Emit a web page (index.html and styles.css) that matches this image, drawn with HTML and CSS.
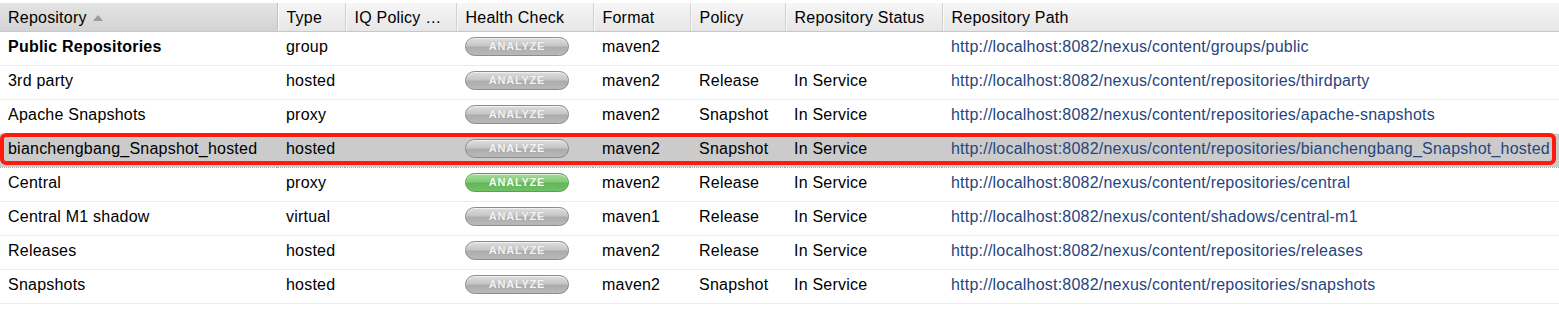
FILE: index.html
```html
<!DOCTYPE html>
<html>
<head>
<meta charset="utf-8">
<link rel="stylesheet" href="styles.css">
</head>
<body>
<div class="grid-wrap">
<table class="grid">
  <colgroup>
    <col class="c-repo"><col class="c-type"><col class="c-iq"><col class="c-health"><col class="c-format"><col class="c-policy"><col class="c-status"><col class="c-path">
  </colgroup>
  <thead>
    <tr>
      <th class="sorted">Repository <span class="sort-arrow"></span></th>
      <th>Type</th>
      <th>IQ Policy …</th>
      <th>Health Check</th>
      <th>Format</th>
      <th>Policy</th>
      <th>Repository Status</th>
      <th class="last">Repository Path</th>
    </tr>
  </thead>
  <tbody>
    <tr>
      <td class="bold">Public Repositories</td><td>group</td><td></td>
      <td><span class="analyze">ANALYZE</span></td>
      <td>maven2</td><td></td><td></td>
      <td class="link">http://localhost:8082/nexus/content/groups/public</td>
    </tr>
    <tr>
      <td>3rd party</td><td>hosted</td><td></td>
      <td><span class="analyze">ANALYZE</span></td>
      <td>maven2</td><td>Release</td><td>In Service</td>
      <td class="link">http://localhost:8082/nexus/content/repositories/thirdparty</td>
    </tr>
    <tr>
      <td>Apache Snapshots</td><td>proxy</td><td></td>
      <td><span class="analyze">ANALYZE</span></td>
      <td>maven2</td><td>Snapshot</td><td>In Service</td>
      <td class="link">http://localhost:8082/nexus/content/repositories/apache-snapshots</td>
    </tr>
    <tr class="selected">
      <td>bianchengbang_Snapshot_hosted</td><td>hosted</td><td></td>
      <td><span class="analyze">ANALYZE</span></td>
      <td>maven2</td><td>Snapshot</td><td>In Service</td>
      <td class="link">http://localhost:8082/nexus/content/repositories/bianchengbang_Snapshot_hosted</td>
    </tr>
    <tr>
      <td>Central</td><td>proxy</td><td></td>
      <td><span class="analyze green">ANALYZE</span></td>
      <td>maven2</td><td>Release</td><td>In Service</td>
      <td class="link">http://localhost:8082/nexus/content/repositories/central</td>
    </tr>
    <tr>
      <td>Central M1 shadow</td><td>virtual</td><td></td>
      <td><span class="analyze">ANALYZE</span></td>
      <td>maven1</td><td>Release</td><td>In Service</td>
      <td class="link">http://localhost:8082/nexus/content/shadows/central-m1</td>
    </tr>
    <tr>
      <td>Releases</td><td>hosted</td><td></td>
      <td><span class="analyze">ANALYZE</span></td>
      <td>maven2</td><td>Release</td><td>In Service</td>
      <td class="link">http://localhost:8082/nexus/content/repositories/releases</td>
    </tr>
    <tr>
      <td>Snapshots</td><td>hosted</td><td></td>
      <td><span class="analyze">ANALYZE</span></td>
      <td>maven2</td><td>Snapshot</td><td>In Service</td>
      <td class="link">http://localhost:8082/nexus/content/repositories/snapshots</td>
    </tr>
  </tbody>
</table>
<div class="highlight-box"></div>
</div>
</body>
</html>
```

FILE: styles.css
```css
html, body {
  margin: 0;
  padding: 0;
  background: #ffffff;
}
body {
  font-family: "Liberation Sans", Arial, sans-serif;
  font-size: 16px;
  letter-spacing: 0.22px;
  color: #000;
}
.grid-wrap {
  position: relative;
  padding-top: 3px;
  width: 1559px;
}
.grid {
  border-collapse: collapse;
  table-layout: fixed;
  width: 1559px;
}
.c-repo { width: 277px; }
.c-type { width: 68px; }
.c-iq { width: 111px; }
.c-health { width: 137px; }
.c-format { width: 97px; }
.c-policy { width: 95px; }
.c-status { width: 157px; }
.c-path { width: auto; }

.grid th {
  box-sizing: border-box;
  height: 28px;
  padding: 2px 0 0 9px;
  text-align: left;
  font-weight: normal;
  white-space: nowrap;
  overflow: hidden;
  background: linear-gradient(#f6f6f6, #e6e6e6);
  border-right: 1px solid #d0d0d0;
  box-shadow: inset 1px 0 0 #fafafa;
  border-bottom: 1px solid #c8c8c8;
  vertical-align: middle;
}
.grid th.sorted {
  padding-left: 8px;
  background: linear-gradient(#e4e4e4, #d3d3d3);
  border-right: 1px solid #c4c4c4;
  box-shadow: none;
}
.grid th.last {
  border-right: none;
}
.sort-arrow {
  display: inline-block;
  width: 0;
  height: 0;
  margin-left: 2px;
  border-left: 5px solid transparent;
  border-right: 5px solid transparent;
  border-bottom: 6px solid #9a9a9a;
  vertical-align: 2px;
}
.grid td {
  box-sizing: border-box;
  height: 34px;
  padding: 0 0 3px 9px;
  white-space: nowrap;
  overflow: hidden;
  border-bottom: 1px solid #ececec;
  vertical-align: middle;
}
.grid td:first-child {
  padding-left: 8px;
}
.grid td.bold {
  font-weight: bold;
}
.grid td.link {
  color: #26457e;
}
.grid tr.selected td {
  background: #cbcbcb;
  border-bottom: 1px dotted #a8a8a8;
}
.analyze {
  display: inline-block;
  box-sizing: border-box;
  width: 104px;
  height: 19px;
  line-height: 17px;
  border-radius: 10px;
  border: 1px solid #8c8c8c;
  background: linear-gradient(#dedede 0%, #c6c6c6 45%, #adadad 55%, #b9b9b9 100%);
  box-shadow: inset 0 1px 0 rgba(255,255,255,0.6);
  color: #f4f4f4;
  font-size: 11px;
  font-weight: bold;
  letter-spacing: 0.8px;
  text-align: center;
  text-shadow: 0 0 1px rgba(120,120,120,0.4);
  vertical-align: middle;
}
.analyze.green {
  border-color: #5a9f52;
  background: linear-gradient(#a2dd9a 0%, #82cb79 45%, #63b75a 55%, #70c168 100%);
  color: #f6fff4;
  text-shadow: 0 0 1px rgba(60,120,50,0.4);
}
.highlight-box {
  position: absolute;
  left: 0;
  top: 133px;
  width: 1556px;
  height: 32px;
  box-sizing: border-box;
  border: 4px solid #ff1a0e;
  border-radius: 6px;
  pointer-events: none;
}
```
